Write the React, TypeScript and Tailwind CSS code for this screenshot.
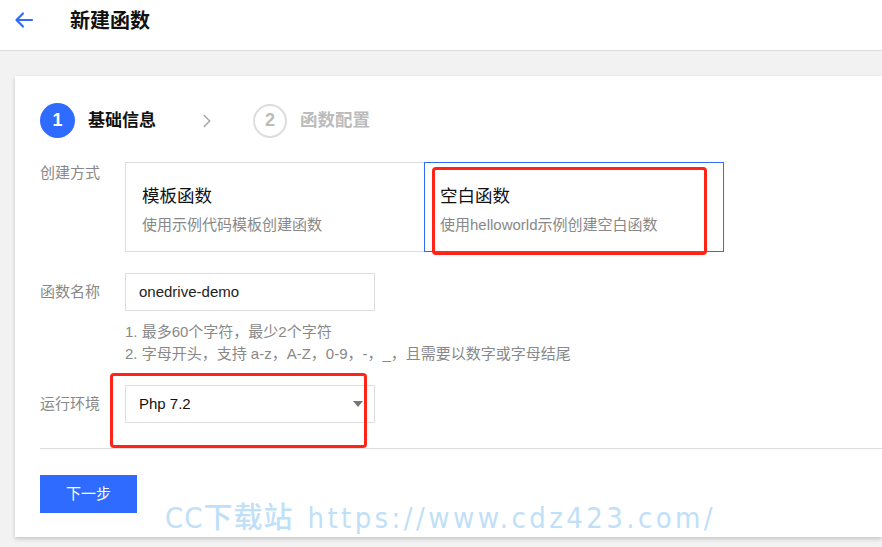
import { ChevronRight } from 'lucide-react'

const FONT = '"Liberation Sans", "Noto Sans CJK SC", sans-serif'

function BackArrow() {
  return (
    <svg width="20" height="18" viewBox="0 0 20 18" fill="none" stroke="#2f6bff" strokeWidth="2.2" strokeLinecap="round" strokeLinejoin="round">
      <path d="M18 9H3" />
      <path d="M9 2.5L2.5 9L9 15.5" />
    </svg>
  )
}

function Field({ label, top, children }: { label: string; top: string; children: React.ReactNode }) {
  return (
    <div className="flex">
      <div className={`w-[85px] shrink-0 text-[15px] text-[#888] ${top}`}>{label}</div>
      <div className="flex-1">{children}</div>
    </div>
  )
}

export default function App() {
  return (
    <div className="relative h-[547px] w-[882px] overflow-hidden bg-[#f2f2f2]" style={{ fontFamily: FONT }}>
      <header className="flex h-[51px] items-start border-b border-[#dcdcdc] bg-white pl-[14px] pt-[6px]">
        <div className="pt-[5px]">
          <BackArrow />
        </div>
        <h1 className="ml-[36px] text-[20px] font-bold text-[#111]">新建函数</h1>
      </header>

      <div className="ml-[15px] mt-[25px] h-[461px] bg-white pl-[25px] pt-[27px] shadow-[0_2px_4px_rgba(0,0,0,0.18)]">
        {/* steps */}
        <div className="flex items-center">
          <div className="flex h-[35px] w-[35px] items-center justify-center rounded-full bg-[#2f6bff] text-[18px] font-bold text-white">1</div>
          <span className="ml-[13px] text-[17px] font-bold text-[#111]">基础信息</span>
          <ChevronRight className="ml-[40px] h-[22px] w-[22px] text-[#aaa]" strokeWidth={1.8} />
          <div className="ml-[35px] flex h-[34px] w-[34px] items-center justify-center rounded-full border-2 border-[#ddd] text-[18px] font-bold text-[#bbb]">2</div>
          <span className="ml-[13px] text-[17.5px] font-bold text-[#bbb]">函数配置</span>
        </div>

        <div className="mt-[24px] flex flex-col">
          <Field label="创建方式" top="pt-[0px]">
            <div className="flex">
              <div className="h-[90px] w-[300px] border border-[#ddd] px-[16px] pt-[20px]">
                <div className="text-[17.5px] leading-[26px] text-[#111]">模板函数</div>
                <div className="mt-[5px] text-[15px] text-[#888]">使用示例代码模板创建函数</div>
              </div>
              <div className="relative -ml-px h-[90px] w-[300px] border border-[#2f6bff] px-[15px] pt-[20px]">
                <div className="text-[17.5px] leading-[26px] text-[#111]">空白函数</div>
                <div className="mt-[5px] text-[15px] text-[#888]">使用helloworld示例创建空白函数</div>
                <div className="absolute left-[7px] top-[4px] h-[88px] w-[275px] rounded-[4px] border-[3px] border-[#ff2415]" />
              </div>
            </div>
          </Field>

          <div className="mt-[21px]">
            <Field label="函数名称" top="pt-[8px]">
              <div className="flex h-[38px] w-[250px] items-center border border-[#ddd] px-[13px] text-[15px] text-[#222]">onedrive-demo</div>
              <div className="mt-[10px] text-[15px] leading-[22px] text-[#888]">
                <div>1. 最多60个字符，最少2个字符</div>
                <div>2. 字母开头，支持 a-z，A-Z，0-9，-，_，且需要以数字或字母结尾</div>
              </div>
            </Field>
          </div>

          <div className="mt-[20px]">
            <Field label="运行环境" top="pt-[8px]">
              <div className="relative flex h-[38px] w-[250px] items-center justify-between border border-[#ddd] px-[13px] text-[15px] text-[#111]">
                <span>Php 7.2</span>
                <span className="mr-[-2px] h-0 w-0 border-x-[5px] border-t-[6px] border-x-transparent border-t-[#777]" />
                <div className="absolute left-[-16px] top-[-13px] h-[75px] w-[257px] rounded-[4px] border-[3px] border-[#ff2415]" />
              </div>
            </Field>
          </div>
        </div>

        <div className="mt-[25px] border-t border-[#ddd]" />

        <button type="button" className="mt-[26px] h-[38px] w-[97px] bg-[#2f6bff] text-[15px] text-white">下一步</button>
      </div>

      <div
        className="pointer-events-none absolute left-[165px] top-[497px] flex items-baseline text-[29px] font-medium text-[#bfe0f7]"
        style={{ fontFamily: '"DejaVu Sans Condensed", "Noto Sans CJK SC", sans-serif' }}
      >
        <span className="tracking-[1px]">CC下载站</span>
        <span className="ml-[14px] tracking-[3.4px]">https://www.cdz423.com/</span>
      </div>
    </div>
  )
}
